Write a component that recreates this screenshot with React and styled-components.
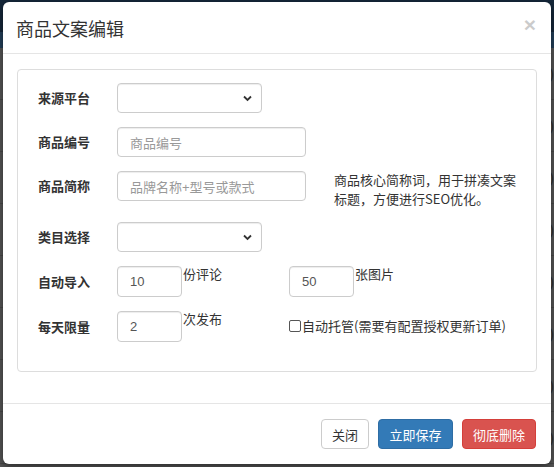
import React from 'react';
import styled, { createGlobalStyle } from 'styled-components';

const GlobalStyle = createGlobalStyle`
  html, body { margin: 0; padding: 0; }
  body {
    width: 554px;
    height: 467px;
    overflow: hidden;
    font-family: "Liberation Sans", "Noto Sans CJK SC", sans-serif;
    font-size: 13px;
    color: #333;
  }
  * { box-sizing: border-box; }
`;

const Screen = styled.div`
  position: relative;
  width: 554px;
  height: 467px;
  background: #575757;
  overflow: hidden;
`;

const NavBar = styled.div`
  height: 32px;
  background: #15273a;
`;

const SubBar = styled.div`
  height: 16px;
  background: #24405a;
`;

const BgRow = styled.div`
  height: 52px;
  border-bottom: 1px solid #4a4a4a;
  display: flex;
  justify-content: flex-end;
  align-items: center;
  color: #2e2e2e;
  font-size: 14px;
`;

const Modal = styled.div`
  position: absolute;
  top: 2px;
  left: 3px;
  width: 548px;
  height: 462px;
  background: #fff;
  border-radius: 6px;
  box-shadow: 0 3px 9px rgba(0, 0, 0, 0.5);
  display: flex;
  flex-direction: column;
`;

const Header = styled.div`
  flex-shrink: 0;
  height: 52px;
  padding: 0 15px 0 13px;
  border-bottom: 1px solid #e5e5e5;
  display: flex;
  align-items: center;
  justify-content: space-between;
`;

const Title = styled.h4`
  margin: 0;
  font-size: 18px;
  font-weight: normal;
  color: #333;
  font-family: "Noto Sans CJK SC", sans-serif;
`;

const Close = styled.button`
  border: 0;
  background: none;
  padding: 0;
  font-size: 21px;
  font-weight: bold;
  line-height: 1;
  color: #000;
  opacity: 0.2;
  font-family: "Liberation Sans", sans-serif;
  margin-top: -6px;
`;

const Body = styled.div`
  flex: 1;
  padding: 15px 14px 0 14px;
`;

const Panel = styled.div`
  border: 1px solid #ddd;
  border-radius: 4px;
  padding: 13px 20px 29px 20px;
  display: flex;
  flex-direction: column;
  gap: 14px;
`;

const Row = styled.div`
  display: grid;
  grid-template-columns: 79px auto;
  align-items: start;
`;

const Label = styled.label`
  height: ${p => (p.$tall ? 31 : 30)}px;
  line-height: ${p => (p.$tall ? 31 : 30)}px;
  font-weight: bold;
  font-size: 13px;
  color: #333;
  font-family: "Noto Sans CJK SC", sans-serif;
`;

const Controls = styled.div`
  display: flex;
  align-items: flex-start;
`;

const Field = styled.div`
  position: relative;
  width: ${p => p.$w}px;
  height: ${p => p.$h || 30}px;
  border: 1px solid #ccc;
  border-radius: 4px;
  box-shadow: inset 0 1px 1px rgba(0, 0, 0, 0.075);
  display: flex;
  align-items: center;
  padding: 0 12px;
  font-size: 13px;
  color: ${p => (p.$placeholder ? '#999' : '#555')};
  font-family: "Liberation Sans", "Noto Sans CJK SC", sans-serif;
  flex-shrink: 0;
`;

const Chevron = styled.svg`
  position: absolute;
  right: 9px;
  top: 11px;
`;

const Suffix = styled.span`
  width: ${p => p.$w}px;
  margin-left: 1px;
  margin-top: -2px;
  font-size: 13px;
  color: #333;
  font-family: "Noto Sans CJK SC", sans-serif;
`;

const Help = styled.p`
  margin: -1px 0 0 28px;
  width: 186px;
  font-size: 13px;
  line-height: 19px;
  color: #333;
  font-family: "Noto Sans CJK SC", sans-serif;
`;

const Check = styled.label`
  display: flex;
  align-items: center;
  margin-top: 5px;
  font-size: 13px;
  color: #333;
  font-family: "Noto Sans CJK SC", sans-serif;
`;

const Box = styled.span`
  width: 12px;
  height: 12px;
  border: 1px solid #555;
  border-radius: 2px;
  margin-right: 1px;
  background: #fff;
`;

const Footer = styled.div`
  flex-shrink: 0;
  border-top: 1px solid #e5e5e5;
  padding: 15px 15px;
  display: flex;
  justify-content: flex-end;
  gap: 9px;
`;

const Button = styled.button`
  width: ${p => p.$w}px;
  height: 30px;
  padding: 0;
  border-radius: 4px;
  font-size: 13px;
  font-family: "Noto Sans CJK SC", sans-serif;
  border: 1px solid ${p => ({ default: '#ccc', primary: '#2e6da4', danger: '#d43f3a' }[p.$variant])};
  background: ${p => ({ default: '#fff', primary: '#337ab7', danger: '#d9534f' }[p.$variant])};
  color: ${p => (p.$variant === 'default' ? '#333' : '#fff')};
`;

const SelectField = ({ w }) => (
  <Field $w={w}>
    <Chevron width="9" height="7" viewBox="0 0 9 7">
      <path d="M1 1.5 L4.5 5 L8 1.5" fill="none" stroke="#333" strokeWidth="1.8" />
    </Chevron>
  </Field>
);

export default function App() {
  return (
    <>
      <GlobalStyle />
      <Screen>
        <NavBar />
        <SubBar />
        {[0, 1, 2, 3, 4, 5, 6, 7].map(i => (
          <BgRow key={i}>)</BgRow>
        ))}
        <Modal>
          <Header>
            <Title>商品文案编辑</Title>
            <Close>×</Close>
          </Header>
          <Body>
            <Panel>
              <Row>
                <Label>来源平台</Label>
                <Controls>
                  <SelectField w={145} />
                </Controls>
              </Row>
              <Row>
                <Label>商品编号</Label>
                <Controls>
                  <Field $w={189} $placeholder>商品编号</Field>
                </Controls>
              </Row>
              <Row>
                <Label>商品简称</Label>
                <Controls>
                  <Field $w={189} $placeholder>品牌名称+型号或款式</Field>
                  <Help>商品核心简称词，用于拼凑文案标题，方便进行SEO优化。</Help>
                </Controls>
              </Row>
              <Row>
                <Label>类目选择</Label>
                <Controls>
                  <SelectField w={145} />
                </Controls>
              </Row>
              <Row>
                <Label $tall>自动导入</Label>
                <Controls>
                  <Field $w={65} $h={31}>10</Field>
                  <Suffix $w={106}>份评论</Suffix>
                  <Field $w={65} $h={31}>50</Field>
                  <Suffix $w={60}>张图片</Suffix>
                </Controls>
              </Row>
              <Row>
                <Label $tall>每天限量</Label>
                <Controls>
                  <Field $w={65} $h={31}>2</Field>
                  <Suffix $w={106}>次发布</Suffix>
                  <Check>
                    <Box />
                    自动托管(需要有配置授权更新订单)
                  </Check>
                </Controls>
              </Row>
            </Panel>
          </Body>
          <Footer>
            <Button $variant="default" $w={48}>关闭</Button>
            <Button $variant="primary" $w={75}>立即保存</Button>
            <Button $variant="danger" $w={74}>彻底删除</Button>
          </Footer>
        </Modal>
      </Screen>
    </>
  );
}
